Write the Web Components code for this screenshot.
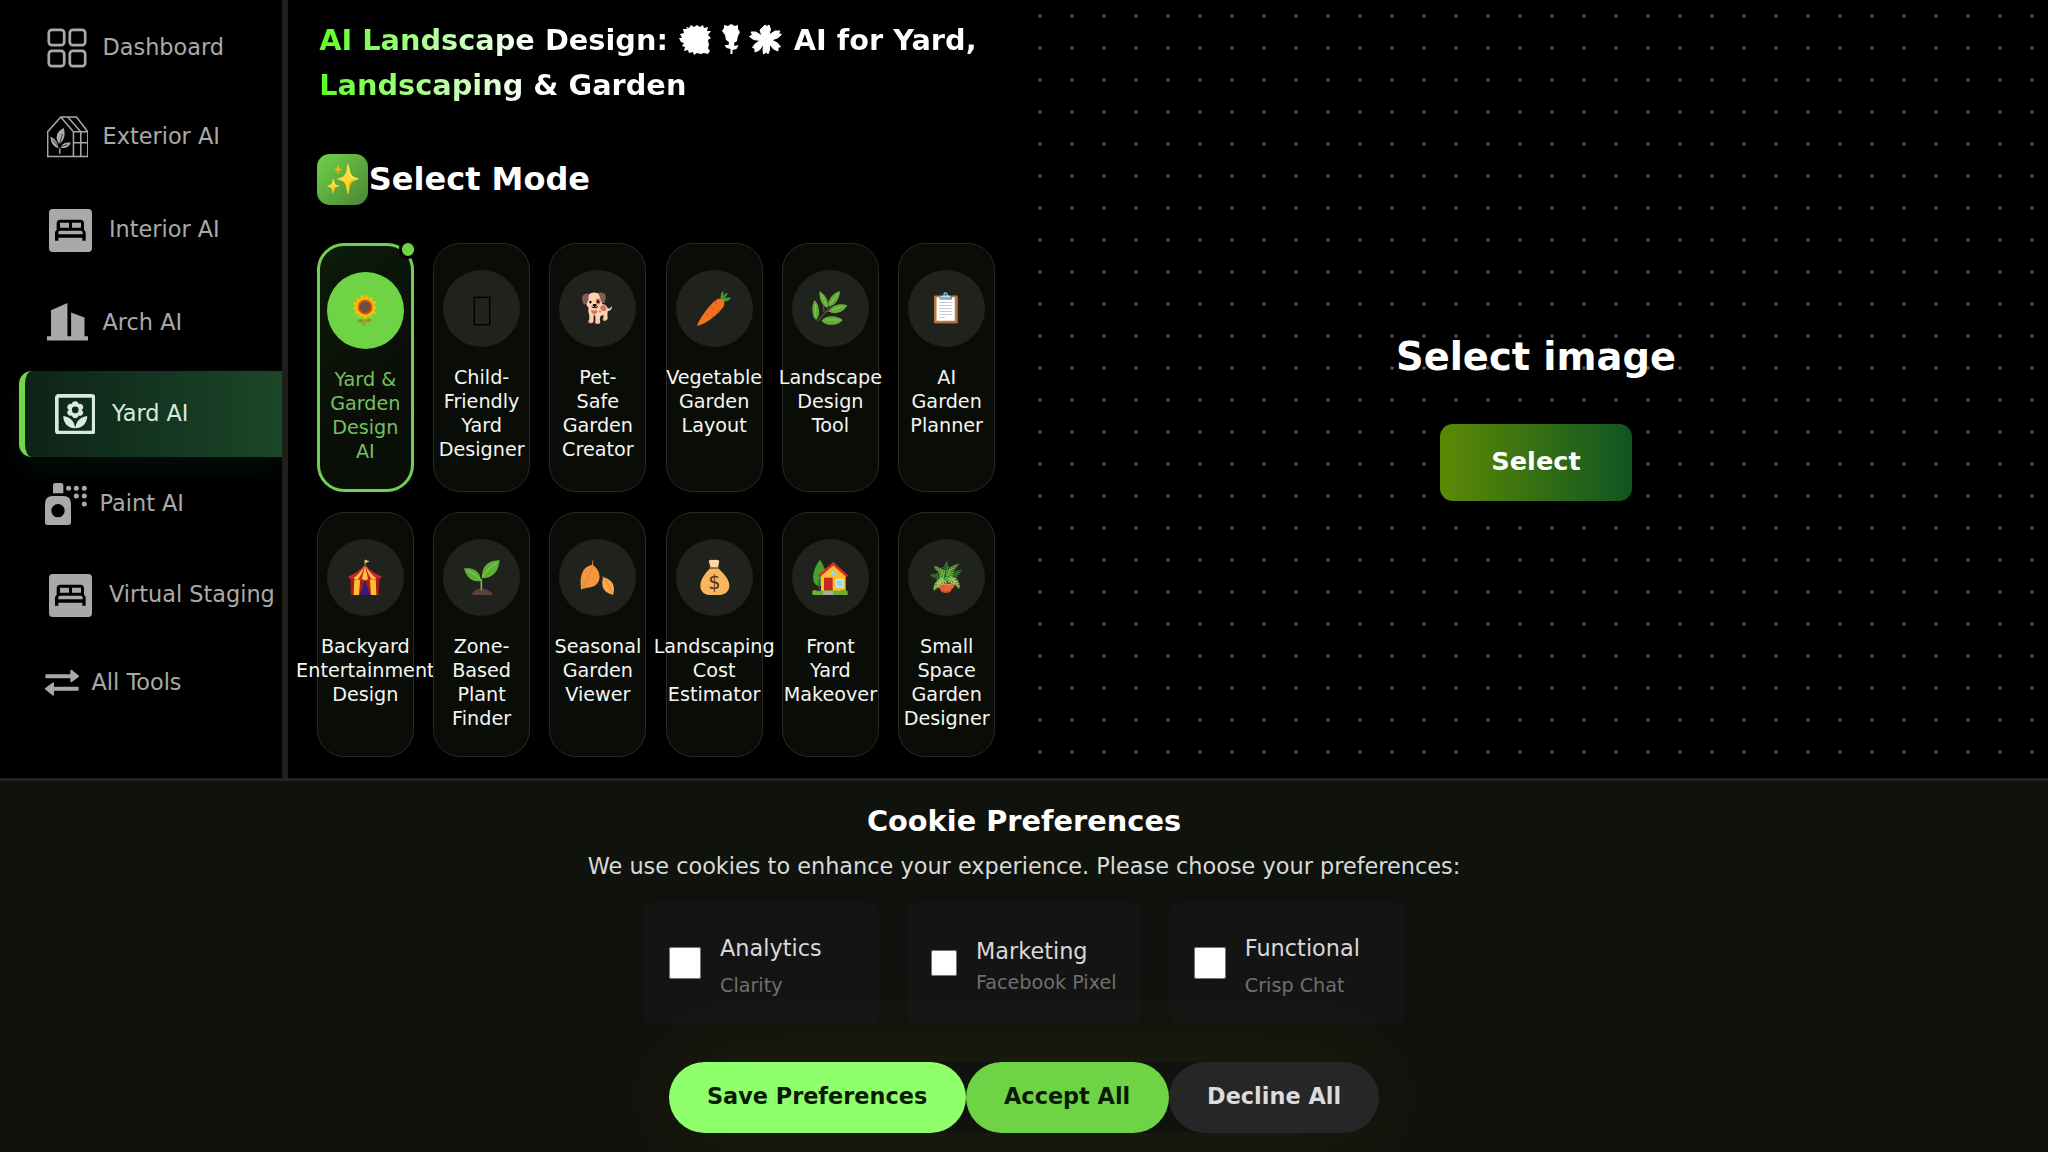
<!DOCTYPE html>
<html lang="en">
<head>
<meta charset="utf-8">
<title>AI Landscape Design</title>
<style>
html, body {
    margin: 0;
    height: 100%;
    background: #000;
    overflow: hidden;
}
body {
    font-family: "DejaVu Sans", "Noto Color Emoji", sans-serif;
    font-size: 22.4px;
    color: #fff;
}
</style>
</head>
<body>
<yard-app></yard-app>
<script>
/**
  * Icons used in the side menu
  **/
const bed = `<svg width="43" height="43" viewBox="0 0 129 129">
<rect width="129" height="129" rx="11" fill="currentColor"/>
<path d="M18 95V71q0-5 5-9V43q0-11 11-11h60q11 0 11 11v19q5 4 5 9v24h-10v-9H28v9z" fill="#000"/>
<path d="M33 41h27v15H33zM69 41h27v15H69zM28 76v-6q0-5 6-5h61q6 0 6 5v6z" fill="currentColor"/>
</svg>`;

const icons = {
    dashboard: `<svg width="40" height="40" viewBox="0 0 40 40" fill="none" stroke="currentColor" stroke-width="2.7">
<rect x="1.8" y="1.8" width="15.4" height="15.4" rx="3.2"/><rect x="22.8" y="1.8" width="15.4" height="15.4" rx="3.2"/>
<rect x="1.8" y="22.8" width="15.4" height="15.4" rx="3.2"/><rect x="22.8" y="22.8" width="15.4" height="15.4" rx="3.2"/>
</svg>`,
    exterior: `<svg width="41.5" height="41.5" viewBox="0 0 124 124" fill="none" stroke="currentColor" stroke-width="4.5">
<path d="M2 121V47L41 3h47l34 44v74zM41 3l38 44v74M79 47h43M62 3l39 44v74M79 80h43"/>
<path d="M50 36C32 44 22 62 34 80l4 4C56 68 54 50 50 36zM10 62c2 18 8 30 25 34-2-16-10-28-25-34zM71 79c-15-1-26 2-31 16 15 3 27-3 31-16z" fill="currentColor" stroke="none"/>
<path d="M46 54l-9 32M18 72l19 22 24-9" stroke="#000" stroke-width="2"/><path d="M38 97v16"/>
</svg>`,
    bed,
    arch: `<svg width="41.5" height="37.5" viewBox="0 0 124 112"><path d="M12 22L61 0v99h11V28l40 15v56h12v13H0V99h12z" fill="currentColor"/></svg>`,
    yard: `<svg width="40.5" height="40.5" viewBox="0 0 122 122" fill="currentColor">
<rect x="5.5" y="5.5" width="111" height="111" rx="6" fill="none" stroke="currentColor" stroke-width="11"/>
<path fill-rule="evenodd" d="M61 22c6 0 10 4 10 8 8-3 15 4 14 10 0 4-3 7-5 8 5 3 7 9 3 14-3 4-8 5-12 3 0 4-4 8-10 8s-10-4-10-8c-7 3-14-2-14-9 0-4 2-7 5-8-5-3-7-9-3-14 3-4 8-5 12-4 0-4 4-8 10-8zM61 38a10 10 0 100 20 10 10 0 000-20z"/>
<path d="M61 103C40 103 25 88 25 66c19 2 34 15 36 37zM61 103c21 0 36-15 36-37-19 2-34 15-36 37z"/>
</svg>`,
    paint: `<svg width="42" height="42" viewBox="0 0 126 126" fill="currentColor">
<path d="M24 31V7q0-7 7-7h17q7 0 7 7v24z"/>
<path fill-rule="evenodd" d="M0 62q0-23 23-23h32q23 0 23 23v56q0 8-8 8H8q-8 0-8-8zM39 63a20 20 0 100 40 20 20 0 000-40z"/>
<circle cx="71" cy="16" r="7.5"/><circle cx="94" cy="16" r="7.5"/><circle cx="118" cy="16" r="7.5"/>
<circle cx="94" cy="39" r="7.5"/><circle cx="118" cy="39" r="7.5"/><circle cx="118" cy="63" r="7.5"/>
</svg>`,
    tools: `<svg width="34" height="27" viewBox="0 0 102 80" fill="currentColor" stroke="currentColor" stroke-linejoin="round" stroke-width="6">
<path d="M4 18h75V5l20 16-20 15V24H4zM98 56H24V43L3 59l21 17V62h74z"/>
</svg>`
};

/**
  * Pictures on the mode cards. A card whose icon is not
  * listed here shows the attribute itself, as an emoji.
  **/
const pictures = {
    blank: `<svg viewBox="0 0 108 108"><rect x="31" y="22" width="46" height="82" fill="none" stroke="#000" stroke-width="4"/></svg>`,
    carrot: `<svg viewBox="0 0 108 108">
<path d="M74 30C72 18 76 8 81 3c3 6 2 12 0 18 3-7 8-12 14-13-1 8-6 13-11 17 7-3 14-3 21-1-5 7-15 12-28 11z" fill="#4c9a2a"/>
<path d="M60 31c9-8 24-5 25 8 1 7-3 12-7 17C61 76 30 102 3 108 10 86 44 40 60 31z" fill="#f4711f"/>
<path d="M56 36l8 6M45 50l9 8M64 60l7 7M30 70l7 5M48 76l5 5" stroke="#d4520f" stroke-width="3"/>
</svg>`,
    herb: `<svg viewBox="0 0 108 108">
<path d="M16 94L54 52M36 66l-2-18M40 64h18" stroke="#6b4a3f" stroke-width="4" fill="none"/>
<g fill="#62ad36"><path d="M8 30C-2 46-2 78 12 90c14-12 12-44-4-60zM22 4c0 18 4 42 24 50C54 38 42 14 22 4zM84 3C64 8 44 30 50 50c20-2 34-26 34-47zM106 46C88 38 58 44 50 64c16 12 46 4 56-18zM92 90C76 76 44 74 28 92c14 18 52 16 64-2z"/></g>
<path d="M10 42v38M28 14l15 32M77 13L54 42M96 48L60 60M80 90H40" stroke="#9ad75f" stroke-width="2" fill="none"/>
</svg>`,
    tent: `<svg viewBox="0 0 108 108">
<path d="M54 20V2" stroke="#c9a13c" stroke-width="3"/><path d="M54 2l14 5-14 6z" fill="#e8cf6a"/>
<path d="M10 54h88l-3 54H12z" fill="#a81c20"/>
<path d="M22 56h18l-4 52H20zM68 56h18l2 52H72z" fill="#fbc02d"/>
<path d="M54 62L38 108h32z" fill="#3a1a78"/>
<path d="M54 16C42 34 24 44 3 53q6 9 14 5 8 8 16 2 8 8 20 2 12 6 20-2 10 6 16-2 10 4 16-5C84 44 66 34 54 16z" fill="#c8282c"/>
<path d="M52 20C44 36 34 46 20 58q7 6 14 1C42 48 48 36 52 20zM56 20c8 16 18 26 32 38q-8 6-15 1C66 48 60 36 56 20zM54 20L45 60q9 7 18 0z" fill="#fdc343"/>
</svg>`,
    seedling: `<svg viewBox="0 0 108 108">
<path d="M22 108c2-8 8-10 14-16 10-4 26-4 34 0 6 5 14 8 17 16z" fill="#5d4038"/>
<path d="M52 93V60" stroke="#7cb342" stroke-width="5"/>
<path d="M0 28c20-2 50 2 51 38C26 70 8 58 0 28zM107 4C80 4 52 16 54 58c34 0 50-22 53-54z" fill="#5fae35"/>
<path d="M10 35q26 8 40 28M98 12Q72 26 56 54" stroke="#9ad75f" stroke-width="2.5" fill="none"/>
</svg>`,
    leaves: `<svg viewBox="0 0 108 108">
<path d="M40 4l-1 14C56 30 68 56 50 76 38 88 18 84 4 92 0 62 0 26 36 17l2-13z" fill="#f3953c"/>
<path d="M67 50l4 5c22 6 38 22 28 53-14-4-24-10-28-18-6-12-5-22-2-34z" fill="#f9a94b"/>
<path d="M38 20Q28 56 8 86M72 56q16 20 24 46" stroke="#e0813a" stroke-width="2.5" fill="none"/>
</svg>`,
    money: `<svg viewBox="0 0 108 108">
<path d="M38 5q7-5 14-2 9-3 18 2l-4 22H44z" fill="#f7d7a4"/>
<path d="M43 28h23c14 12 34 32 34 52 0 20-16 29-45 29S13 100 13 80c0-20 18-42 30-52z" fill="#f9b65c"/>
<path d="M42 27h25" stroke="#8a5a2b" stroke-width="5" stroke-linecap="round"/>
<text x="55" y="90" font-size="58" text-anchor="middle" fill="#54341c" font-family="DejaVu Sans, sans-serif">$</text>
</svg>`,
    house: `<svg viewBox="0 0 108 108">
<path d="M24 2C6 24-4 60 10 76c8 8 28 6 32-6C48 50 36 18 24 2z" fill="#46a02f"/><path d="M22 60v40" stroke="#5d4038" stroke-width="4"/>
<path d="M27 50l37-34 37 34v50H27z" fill="#fbc02d"/>
<path d="M20 52l44-38 42 38" fill="none" stroke="#d32f2f" stroke-width="8"/>
<path d="M36 56h26v42H36z" fill="#c62828"/><path d="M73 62h20v22H73z" fill="#90d4f7" stroke="#fff" stroke-width="2"/>
<circle cx="64" cy="42" r="7" fill="#90d4f7"/>
<path d="M1 108V96q8-6 16 0h18v-2h30v3q8-6 16-1 12-7 26 0v12z" fill="#6dae35"/>
<path d="M35 96h28l2 12H32z" fill="#b0a99c"/>
</svg>`
};

class NavItem extends HTMLElement {
    constructor() {
        super();
        this.attachShadow({ mode: "open" });
        this.shadowRoot.innerHTML = `
<style>
:host {
    display: flex;
    align-items: center;
    box-sizing: border-box;
    gap: var(--gap, 14.5px);
    padding-left: var(--pad, 46.5px);
    height: var(--height, 90px);
    color: #a9a9a9;
    white-space: nowrap;
    line-height: 26px;
}
:host([active]) {
    margin: 5.5px 0 2.5px 19.2px;
    border-left: 6.4px solid #72d54a;
    border-radius: 12.8px 0 0 12.8px;
    background: linear-gradient(90deg, #0d2319, #1b4728);
    box-shadow: 0 12px 26px rgba(20, 80, 50, .18);
    color: #d8eadb;
}
svg { display: block; flex: none; }
span { margin-top: var(--shift, -2px); }
</style>
${icons[this.getAttribute("icon")]}
<span><slot></slot></span>`;
    }
}

class ModeCard extends HTMLElement {
    constructor() {
        super();
        this.attachShadow({ mode: "open" });
        const icon = this.getAttribute("icon");
        this.shadowRoot.innerHTML = `
<style>
:host {
    display: flex;
    flex-direction: column;
    align-items: center;
    box-sizing: border-box;
    position: relative;
    gap: 19.2px;
    padding: 25.6px 12.8px;
    border: 1.6px solid #282a26;
    border-radius: 27px;
    background: #0a0c07;
    font-size: 19.2px;
    line-height: 24px;
    text-align: center;
    color: #f4f6f2;
}
:host([selected]) {
    border: 3.2px solid #72cf52;
    background: linear-gradient(135deg, #0c1c0a, #0a0e07 60%, #071008);
    color: #74c060;
}
.icon {
    display: flex;
    align-items: center;
    justify-content: center;
    flex: none;
    width: 76.8px;
    height: 76.8px;
    border-radius: 50%;
    background: #20221d;
    font-size: 28.8px;
    line-height: 36px;
    color: #000;
}
.icon svg { width: 36px; height: 36px; }
:host([selected]) .icon { background: #6fd346; }
:host([selected])::after {
    content: "";
    position: absolute;
    top: -6px;
    right: -6.5px;
    width: 12.8px;
    height: 12.8px;
    border: 3.2px solid #000;
    border-radius: 50%;
    background: #6fd346;
}
</style>
<div class="icon">${pictures[icon] || icon}</div>
<div><slot></slot></div>`;
    }
}

class ModePanel extends HTMLElement {
    constructor() {
        super();
        this.attachShadow({ mode: "open" });
        this.shadowRoot.innerHTML = `
<style>
:host {
    display: block;
    box-sizing: border-box;
    padding: 18px 28.8px 0;
}
h1 {
    margin: 0 2.4px 45.6px;
    font-size: 28.8px;
    line-height: 45px;
    background: linear-gradient(90deg, #5cff24, #fff 32%);
    -webkit-background-clip: text;
    background-clip: text;
    color: transparent;
}
h1 svg { width: 35.2px; height: 31px; vertical-align: -5.3px; overflow: visible; }
.head {
    display: flex;
    align-items: center;
    gap: .8px;
    margin-bottom: 38.4px;
}
.badge {
    display: flex;
    align-items: center;
    justify-content: center;
    box-sizing: border-box;
    width: 51.2px;
    height: 51.2px;
    padding-left: 2px;
    border-radius: 12.8px;
    background: linear-gradient(135deg, #6fd346, #4b8436);
    font-size: 28.8px;
}
h2 { margin: 0; font-size: 32px; line-height: 38px; }
.grid {
    display: grid;
    grid-template-columns: repeat(6, minmax(0, 1fr));
    gap: 19.8px 19.2px;
}
</style>
<h1><span>AI Landscape Design:</span> <svg viewBox="-2 0 35.2 31" fill="#fff"><path d="M6 3l3 1 2-3 3 2 3-2 3 2 3-2 1 3 4-1-1 4 4 0-3 4 3 3-3 2 1 5-1 3 2 3-2 3-4-1-3 1-4-1-3 2-1-3-4 1-1-3-4 1 1-4-3-1 2-3-3-1-2-4 3 0-2-4 4-1-1-4 4 0z"/></svg><svg viewBox="0 0 35.2 31" fill="#fff"><path d="M11 1l4 1 3-2 4 2 3-1v4l2 3-2 4-1 5-3 2 .5 3 4-1-2 4-4 1v4h-2v-5l-4-1-2-3 4 0 .5-3-3-2-1-5-3-4 2-3z"/></svg><svg viewBox="-2 0 35.2 31" fill="#fff" stroke="#fff" stroke-linejoin="round"><path d="M15 1l2 1.500L19 1l1.500 4-1.500 6 6-4 5 0-1.500 2.500 3 1-4 3.500-6 2 6 3 3 4-2.500 0 0 4-4.500-2-4-5 0 6-1.500 4-1.500-2-3 2-.5-4 .5-6-4 6-4.500 2 0-3.500-2.500-1 3-4 5-3-7-1-4-3 3-1.500-1.500-3 5 0 6 4-2-6z"/></svg> <span>AI for Yard,</span><br><span>Landscaping &amp; Garden</span></h1>
<div class="head"><span class="badge">✨</span><h2>Select Mode</h2></div>
<div class="grid"><slot></slot></div>`;
    }
}

class ImagePicker extends HTMLElement {
    constructor() {
        super();
        this.attachShadow({ mode: "open" });
        this.shadowRoot.innerHTML = `
<style>
:host {
    display: flex;
    flex-direction: column;
    align-items: center;
    box-sizing: border-box;
    padding-top: 334px;
    background: radial-gradient(circle, #4c4c4c 1.5px, transparent 2.1px) 0 0 / 32px 32px;
}
h2 { margin: 0 0 45px; font-size: 38.4px; line-height: 45px; }
button {
    width: 192px;
    height: 76.8px;
    padding: 0 0 2px;
    border: 0;
    border-radius: 12.8px;
    background: linear-gradient(90deg, #5c8a04, #0f5522);
    color: #fff;
    font: bold 25.6px "DejaVu Sans", sans-serif;
}
</style>
<h2>Select image</h2>
<button>Select</button>`;
    }
}

class CookieOption extends HTMLElement {
    constructor() {
        super();
        this.attachShadow({ mode: "open" });
        this.shadowRoot.innerHTML = `
<style>
:host {
    display: flex;
    align-items: center;
    box-sizing: border-box;
    gap: 19.2px;
    width: 236.8px;
    height: 122.4px;
    padding: 0 25.6px;
    border-radius: 12.8px;
    background: #141415;
    --box: 32px;
}
:host([compact]) { --box: 25.6px; --space: 8px; }
input {
    flex: none;
    width: var(--box);
    height: var(--box);
    margin: 0;
}
.text {
    display: flex;
    flex-direction: column;
    gap: var(--space, 14.4px);
    padding-top: 6px;
    white-space: nowrap;
    line-height: 26px;
    color: #d8d8d8;
}
small { font-size: 19.2px; line-height: 22px; color: #70706e; }
</style>
<input type="checkbox">
<div class="text"><slot></slot><small>${this.getAttribute("vendor")}</small></div>`;
    }
}

class PillButton extends HTMLElement {
    constructor() {
        super();
        this.attachShadow({ mode: "open" });
        this.shadowRoot.innerHTML = `
<style>
:host {
    display: block;
    padding: 0 38.4px;
    border-radius: 36px;
    line-height: 68.8px;
    height: 70.4px;
    font-weight: bold;
    background: #262627;
    color: #dcdcdc;
}
:host([kind="save"]) { background: #8fff6b; color: #0a1a05; }
:host([kind="accept"]) { background: #6fd346; color: #0a1a05; }
</style>
<slot></slot>`;
    }
}

class CookieBar extends HTMLElement {
    constructor() {
        super();
        this.attachShadow({ mode: "open" });
        this.shadowRoot.innerHTML = `
<style>
:host {
    display: flex;
    flex-direction: column;
    align-items: center;
    box-sizing: border-box;
    padding-top: 23.4px;
    border-top: 3.2px solid #22241f;
    background: #10120d;
    overflow: hidden;
}
h3 { margin: 0 0 15px; font-size: 28.8px; line-height: 34px; }
p { margin: 0 0 22.6px; line-height: 26px; color: #d9dad6; }
.options { display: flex; gap: 25.6px; margin-bottom: 38.2px; }
.buttons {
    display: flex;
    border-radius: 36px;
    box-shadow: 0 0 100px rgba(190, 200, 20, .1);
}
</style>
<h3>Cookie Preferences</h3>
<p>We use cookies to enhance your experience. Please choose your preferences:</p>
<div class="options">
    <cookie-option vendor="Clarity">Analytics</cookie-option>
    <cookie-option vendor="Facebook Pixel" compact>Marketing</cookie-option>
    <cookie-option vendor="Crisp Chat">Functional</cookie-option>
</div>
<div class="buttons">
    <pill-button kind="save">Save Preferences</pill-button>
    <pill-button kind="accept">Accept All</pill-button>
    <pill-button>Decline All</pill-button>
</div>`;
    }
}

class YardApp extends HTMLElement {
    constructor() {
        super();
        this.attachShadow({ mode: "open" });
        this.shadowRoot.innerHTML = `
<style>
:host {
    display: grid;
    grid-template-columns: 288px 736px 1fr;
    grid-template-rows: 777.6px 374.4px;
    height: 1152px;
}
nav {
    box-sizing: border-box;
    padding-top: 3.5px;
    border-right: 6.4px solid #1f201b;
    overflow: hidden;
}
cookie-bar { grid-column: 1 / -1; }
</style>
<nav>
    <nav-item icon="dashboard" style="--height: 88.5px; --pad: 47px; --gap: 15.5px">Dashboard</nav-item>
    <nav-item icon="exterior" style="--height: 90px; --shift: -1.500px">Exterior AI</nav-item>
    <nav-item icon="bed" style="--height: 96px; --pad: 49px; --gap: 17px">Interior AI</nav-item>
    <nav-item icon="arch" style="--height: 87.5px; --shift: -.5px">Arch AI</nav-item>
    <nav-item icon="yard" active style="--height: 86.4px; --pad: 29.4px; --gap: 17px">Yard AI</nav-item>
    <nav-item icon="paint" style="--height: 88px; --pad: 45px; --gap: 12.5px">Paint AI</nav-item>
    <nav-item icon="bed" style="--height: 95px; --pad: 49px; --gap: 17px">Virtual Staging</nav-item>
    <nav-item icon="tools" style="--height: 79px; --pad: 45px; --gap: 12.5px; --shift: -1px">All Tools</nav-item>
</nav>
<mode-panel>
    <mode-card icon="🌻" selected>Yard &amp; Garden Design AI</mode-card>
    <mode-card icon="blank">Child-Friendly Yard Designer</mode-card>
    <mode-card icon="🐕">Pet-Safe Garden Creator</mode-card>
    <mode-card icon="carrot">Vegetable Garden Layout</mode-card>
    <mode-card icon="herb">Landscape Design Tool</mode-card>
    <mode-card icon="📋">AI Garden Planner</mode-card>
    <mode-card icon="tent">Backyard Entertainment Design</mode-card>
    <mode-card icon="seedling">Zone-Based Plant Finder</mode-card>
    <mode-card icon="leaves">Seasonal Garden Viewer</mode-card>
    <mode-card icon="money">Landscaping Cost Estimator</mode-card>
    <mode-card icon="house">Front Yard Makeover</mode-card>
    <mode-card icon="🪴">Small Space Garden Designer</mode-card>
</mode-panel>
<image-picker></image-picker>
<cookie-bar></cookie-bar>`;
    }
}

window.customElements.define("nav-item", NavItem);
window.customElements.define("mode-card", ModeCard);
window.customElements.define("mode-panel", ModePanel);
window.customElements.define("image-picker", ImagePicker);
window.customElements.define("cookie-option", CookieOption);
window.customElements.define("pill-button", PillButton);
window.customElements.define("cookie-bar", CookieBar);
window.customElements.define("yard-app", YardApp);
</script>
</body>
</html>
